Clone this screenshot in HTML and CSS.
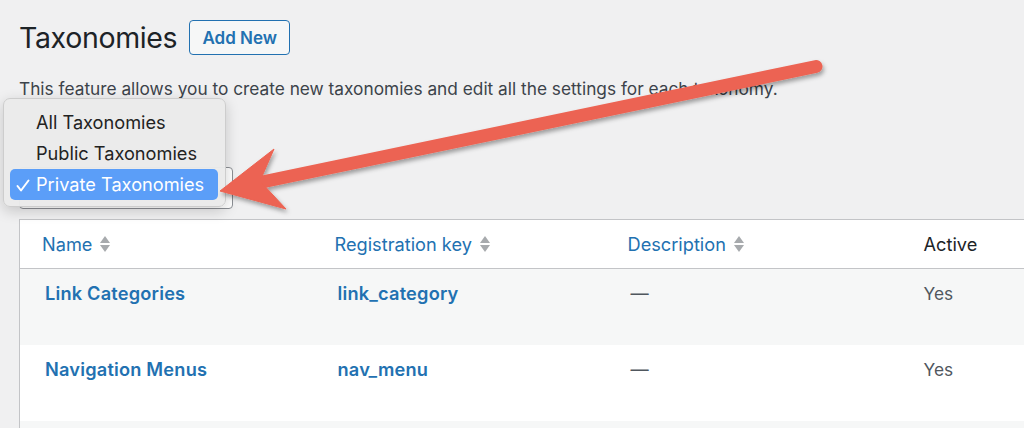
FILE: index.html
```html
<!DOCTYPE html>
<html lang="en">
<head>
<meta charset="utf-8">
<title>Taxonomies</title>
<link rel="stylesheet" href="styles.css">
</head>
<body>
<div class="wrap">
  <div class="page-head">
    <h1 class="title">Taxonomies</h1>
    <a class="add-new" href="#">Add New</a>
  </div>
  <p class="intro">This feature allows you to create new taxonomies and edit all the settings for each taxonomy.</p>
  <div class="filter">
    <div class="select-box"></div>
  </div>
  <table class="list">
    <colgroup>
      <col class="c1"><col class="c2"><col class="c3"><col class="c4">
    </colgroup>
    <thead>
      <tr>
        <th class="sortable"><span class="th-link">Name <span class="sort"></span></span></th>
        <th class="sortable"><span class="th-link">Registration key <span class="sort"></span></span></th>
        <th class="sortable"><span class="th-link">Description <span class="sort"></span></span></th>
        <th class="plain">Active</th>
      </tr>
    </thead>
    <tbody>
      <tr class="alt">
        <td class="name"><a href="#">Link Categories</a></td>
        <td class="key"><a href="#">link_category</a></td>
        <td class="desc">—</td>
        <td class="active">Yes</td>
      </tr>
      <tr>
        <td class="name"><a href="#">Navigation Menus</a></td>
        <td class="key"><a href="#">nav_menu</a></td>
        <td class="desc">—</td>
        <td class="active">Yes</td>
      </tr>
      <tr class="alt">
        <td class="name"></td><td class="key"></td><td class="desc"></td><td class="active"></td>
      </tr>
    </tbody>
  </table>
</div>

<div class="menu">
  <div class="menu-item">All Taxonomies</div>
  <div class="menu-item">Public Taxonomies</div>
  <div class="menu-item selected">
    <svg class="check" width="14" height="13" viewBox="0 0 14 13"><polyline points="1.5,7 5,11.5 12.5,1.5" fill="none" stroke="#fff" stroke-width="2" stroke-linecap="round" stroke-linejoin="round"/></svg>
    Private Taxonomies
  </div>
</div>

<svg class="arrow" width="1024" height="428" viewBox="0 0 1024 428">
  <defs>
    <filter id="sh" x="-10%" y="-30%" width="120%" height="160%">
      <feDropShadow dx="1.5" dy="3" stdDeviation="2" flood-color="#000" flood-opacity="0.35"/>
    </filter>
  </defs>
  <g filter="url(#sh)" fill="#ec6352" stroke="#ec6352">
    <line x1="816" y1="66.5" x2="262" y2="182" stroke-width="13" stroke-linecap="round"/>
    <polygon points="220,191 274,149 260,181 286,209" stroke-width="1" stroke-linejoin="round"/>
  </g>
</svg>
</body>
</html>
```

FILE: styles.css
```css
html, body {
  margin: 0;
  padding: 0;
  overflow: hidden;
  background: #f0f0f1;
  width: 1024px;
  height: 428px;
}
body {
  position: relative;
  font-family: Inter, "Liberation Sans", Arial, sans-serif;
  color: #3c434a;
}
.wrap {
  padding: 19px 0 0 19px;
}
.page-head {
  display: flex;
  align-items: center;
  gap: 12px;
  height: 37px;
}
.title {
  margin: 0;
  font-size: 28.5px;
  font-weight: 400;
  color: #1d2327;
  letter-spacing: -0.35px;
  line-height: 37px;
}
.add-new {
  display: inline-flex;
  align-items: center;
  justify-content: center;
  box-sizing: border-box;
  width: 101px;
  height: 35px;
  border: 1px solid #2271b1;
  border-radius: 4px;
  background: #f6f7f7;
  color: #2271b1;
  font-size: 17px;
  font-weight: 600;
  text-decoration: none;
}
.intro {
  margin: 21px 0 0;
  font-size: 17.3px;
  line-height: 24px;
  color: #3c434a;
}
.filter {
  height: 52px;
  padding-top: 66px;
}
.select-box {
  box-sizing: border-box;
  width: 214px;
  height: 42px;
  border: 1px solid #8c8f94;
  border-radius: 4px;
  background: #fff;
}
.list {
  margin-top: 0;
  width: 1300px;
  table-layout: fixed;
  border-collapse: collapse;
  background: #fff;
  border: 1px solid #c3c4c7;
  font-size: 18.2px;
}
.c1, .c2 { width: 293px; }
.c3 { width: 296px; }
.list th {
  height: 48px;
  text-align: left;
  font-weight: 400;
  border-bottom: 1px solid #c3c4c7;
  padding: 0 0 0 22px;
  vertical-align: middle;
}
.th-link {
  color: #2271b1;
  display: inline-flex;
  align-items: center;
  gap: 8px;
}
.plain {
  color: #1d2327;
}
.sort {
  display: inline-flex;
  flex-direction: column;
  gap: 2px;
}
.sort::before, .sort::after {
  content: "";
  width: 0;
  height: 0;
  border-left: 5px solid transparent;
  border-right: 5px solid transparent;
}
.sort::before { border-bottom: 7px solid #a7aaad; }
.sort::after { border-top: 7px solid #a7aaad; }
.list td {
  height: 76px;
  box-sizing: border-box;
  vertical-align: top;
  padding: 12px 0 0 25px;
  line-height: 24px;
}
.list tr.alt td { background: #f6f7f7; }
.list td a {
  color: #2271b1;
  font-weight: 600;
  letter-spacing: 0.2px;
  text-decoration: none;
}
.list td.desc { color: #50575e; }
.list td.active { color: #50575e; padding-left: 22px; font-size: 17.3px; padding-top: 13px; }

.menu {
  position: absolute;
  left: 3px;
  top: 98px;
  width: 223px;
  box-sizing: border-box;
  padding: 8px 7px 6px 6px;
  border: 1px solid #cdcdcd;
  border-radius: 7px;
  background: rgba(234, 234, 234, 0.97);
  box-shadow: 0 4px 14px rgba(0, 0, 0, 0.18);
}
.menu-item {
  position: relative;
  height: 31px;
  line-height: 31px;
  padding-left: 26px;
  font-size: 18.2px;
  color: #222;
  border-radius: 5px;
}
.menu-item.selected {
  background: #5b9ef8;
  color: #fff;
}
.check {
  position: absolute;
  left: 6px;
  top: 10px;
}
.arrow {
  position: absolute;
  left: 0;
  top: 0;
  pointer-events: none;
}
```
